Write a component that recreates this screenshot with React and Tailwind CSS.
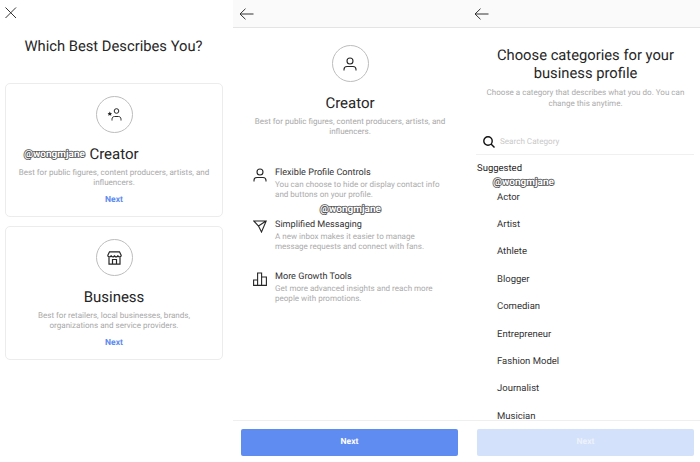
import React from "react";

const font = { fontFamily: "Roboto, 'Liberation Sans', sans-serif" };

function Watermark({ className }) {
  return (
    <span className={`absolute text-[10px] leading-[12px] font-bold text-white [-webkit-text-stroke:1.6px_#555] [paint-order:stroke_fill] ${className}`}>
      @wongmjane
    </span>
  );
}

function Back({ className = "pl-[6px]" }) {
  return (
    <div className={`h-[28px] shrink-0 bg-[#fafafa] border-b border-[#e4e4e4] flex items-center ${className}`}>
      <svg width="15" height="12" viewBox="0 0 15 12" fill="none" stroke="#333" strokeWidth="1">
        <path d="M14.5 6H1M6.5 .7 1 6l5.500 5.300" />
      </svg>
    </div>
  );
}

function Circle({ children, className = "" }) {
  return (
    <div className={`w-[37px] h-[37px] rounded-full border border-[#bdbdbd] flex items-center justify-center ${className}`}>
      {children}
    </div>
  );
}

function PersonIcon({ size = 14 }) {
  return (
    <svg width={size} height={size} viewBox="0 0 14 14" fill="none" stroke="#262626" strokeWidth="1.100">
      <circle cx="7" cy="4" r="3" />
      <path d="M1 13.500v-1c0-2 1.500-3 3-3h6c1.500 0 3 1 3 3v1" />
    </svg>
  );
}

function Card({ icon, title, lines, className = "" }) {
  return (
    <div className={`h-[134px] rounded-[5px] border border-[#ececec] flex flex-col items-center pt-[12px] ${className}`}>
      <Circle>{icon}</Circle>
      <div className="mt-[11px] text-[15px] leading-[20px] text-[#262626]">{title}</div>
      <div className="mt-[4px] text-[8.050px] leading-[9.500px] text-[#a8a8a8] text-center">
        {lines.map((l) => <div key={l}>{l}</div>)}
      </div>
      <div className="mt-[8px] text-[8.500px] leading-[10px] font-bold text-[#5d8bf0]">Next</div>
    </div>
  );
}

function Feature({ icon, title, lines }) {
  return (
    <div className="h-[52px] flex">
      <div className="w-[42px] shrink-0 pl-[20px] pt-[1px]">{icon}</div>
      <div>
        <div className="text-[9.100px] leading-[12px] text-[#333]">{title}</div>
        <div className="mt-[1px] text-[8.050px] leading-[9.700px] text-[#ababab]">
          {lines.map((l) => <div key={l}>{l}</div>)}
        </div>
      </div>
    </div>
  );
}

function Footer({ className, textClass, pad }) {
  return (
    <div className={`h-[42px] shrink-0 border-t border-[#efefef] pt-2 bg-white relative ${pad}`}>
      <div className={`h-[27px] rounded-[2px] flex items-center justify-center text-[8.500px] font-bold ${className} ${textClass}`}>
        Next
      </div>
    </div>
  );
}

const cats = ["Actor", "Artist", "Athlete", "Blogger", "Comedian", "Entrepreneur", "Fashion Model", "Journalist", "Musician"];

export default function App() {
  return (
    <div className="w-[700px] h-[462px] bg-white flex overflow-hidden [text-rendering:geometricPrecision]" style={font}>
      {/* Panel 1 */}
      <div className="w-[233px] relative px-[5px]">
        <div className="h-[28px] pt-[7px]">
          <svg width="12" height="12" viewBox="0 0 12 12" fill="none" stroke="#333" strokeWidth="1">
            <path d="M.5 .5 11 11M11 .5 .5 11" />
          </svg>
        </div>
        <div className="mt-[8px] text-[14.750px] leading-[20px] text-center text-[#262626] pr-[6px]">Which Best Describes You?</div>
        <div className="mt-[27px] w-[218px] flex flex-col gap-[9px]">
          <Card
            title="Creator"
            lines={["Best for public figures, content producers, artists, and", "influencers."]}
            icon={
              <svg width="15" height="13" viewBox="0 0 15 13" fill="none" stroke="#262626" strokeWidth="1">
                <circle cx="9.500" cy="3" r="2.300" />
                <path d="M5 12.500v-1c0-2 1-3 2.500-3h4c1.500 0 2.500 1 2.500 3v1" />
                <path d="M2.800 3.500 3.500 5l1.500.2-1 1 .3 1.500-1.500-.7-1.500.7.3-1.500-1-1L2.100 5z" fill="#262626" stroke="none" />
              </svg>
            }
          />
          <Card
            title="Business"
            lines={["Best for retailers, local businesses, brands,", "organizations and service providers."]}
            icon={
              <svg width="15" height="14" viewBox="0 0 15 14" fill="none" stroke="#262626" strokeWidth="1.200">
                <path d="M2.500 .8h10l1.700 3.500c0 2.200-3.200 2.200-3.400 0 0 2.200-3.300 2.200-3.300 0 0 2.200-3.300 2.200-3.300 0C4 6.500.8 6.500.8 4.300z" />
                <path d="M2 6.500v6.700h11V6.500M5.500 13V8.500h4V13" />
              </svg>
            }
          />
        </div>
        <Watermark className="left-[24px] top-[149px]" />
      </div>

      {/* Panel 2 */}
      <div className="w-[234px] relative flex flex-col">
        <Back />
        <div className="flex-1 flex flex-col">
          <div className="flex flex-col items-center pt-[17px]">
            <Circle><PersonIcon /></Circle>
            <div className="mt-[11px] text-[15px] leading-[20px] text-[#262626]">Creator</div>
            <div className="mt-[4px] text-[8.050px] leading-[9.500px] text-[#a8a8a8] text-center">
              <div>Best for public figures, content producers, artists, and</div>
              <div>influencers.</div>
            </div>
          </div>
          <div className="mt-[31px]">
            <Feature
              title="Flexible Profile Controls"
              lines={["You can choose to hide or display contact info", "and buttons on your profile."]}
              icon={<PersonIcon size={14} />}
            />
            <Feature
              title="Simplified Messaging"
              lines={["A new inbox makes it easier to manage", "message requests and connect with fans."]}
              icon={
                <svg width="14" height="13" viewBox="0 0 14 13" fill="none" stroke="#262626" strokeWidth="1.100">
                  <path d="M.8 1h12.400L8.500 12 5.500 6zM5.500 6 13 1" />
                </svg>
              }
            />
            <Feature
              title="More Growth Tools"
              lines={["Get more advanced insights and reach more", "people with promotions."]}
              icon={
                <svg width="14" height="14" viewBox="0 0 14 14" fill="none" stroke="#262626" strokeWidth="1.100">
                  <path d="M.6 13.400V8h4v5.400zM4.600 13.400V1h4v12.400zM8.600 13.400V5h4.800v8.400z" />
                </svg>
              }
            />
          </div>
        </div>
        <Footer className="bg-[#5f8cf0]" textClass="text-white" pad="pl-2 pr-[9px]" />
        <Watermark className="left-[87px] top-[204px]" />
      </div>

      {/* Panel 3 */}
      <div className="w-[233px] relative flex flex-col">
        <Back className="pl-[7px]" />
        <div className="flex-1 min-h-0 overflow-hidden">
          <div className="pt-[18px] pl-[4px] text-center text-[14.750px] leading-[18px] text-[#262626]">
            <div>Choose categories for your</div>
            <div>business profile</div>
          </div>
          <div className="mt-[6px] pl-[4px] text-center text-[8.050px] leading-[10.500px] text-[#ababab]">
            <div>Choose a category that describes what you do. You can</div>
            <div>change this anytime.</div>
          </div>
          <div className="mt-[20px] ml-[9px] mr-[6px] h-[26px] border-b border-[#f0f0f0] flex items-center pl-[7px]">
            <svg width="12" height="12" viewBox="0 0 12 12" fill="none" stroke="#111" strokeWidth="1.400">
              <circle cx="5" cy="5" r="4.200" />
              <path d="M8 8l3.500 3.500" />
            </svg>
            <span className="ml-[5px] text-[8.100px] text-[#c9c9c9]">Search Category</span>
          </div>
          <div className="mt-[8px] ml-[10px] text-[9.500px] leading-[12px] text-[#262626]">Suggested</div>
          <div className="mt-[9px] ml-[30px]">
            {cats.map((c) => (
              <div key={c} className="h-[27.400px] flex items-center text-[9.500px] text-[#333]">{c}</div>
            ))}
          </div>
        </div>
        <Footer className="bg-[#d3e1fa]" textClass="text-[#edf2fc]" pad="pl-[10px] pr-[6px]" />
        <Watermark className="left-[26px] top-[177px]" />
      </div>
    </div>
  );
}
